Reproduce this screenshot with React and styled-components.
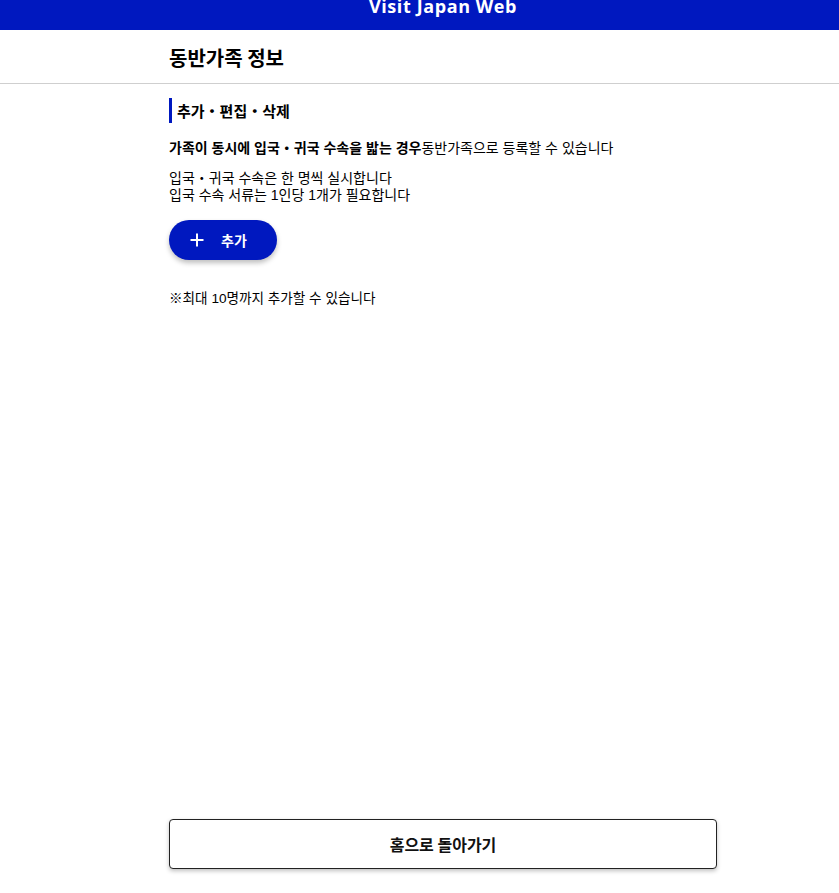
import React from "react";
import styled, { createGlobalStyle } from "styled-components";

const Global = createGlobalStyle`
  html, body { margin: 0; padding: 0; background: #fff; }
  body { font-family: "Liberation Sans", "Noto Sans CJK KR", sans-serif; color: #000; }
  * { box-sizing: border-box; }
`;

const Page = styled.div`
  min-height: 893px;
  display: flex;
  flex-direction: column;
`;

const Header = styled.header`
  height: 30px;
  background: #0018bf;
  display: flex;
  justify-content: center;
  overflow: hidden;
  padding-left: 47px;
`;

const Brand = styled.div`
  font-family: "Open Sans", sans-serif;
  font-weight: 700;
  font-size: 18px;
  letter-spacing: 0.6px;
  color: #fff;
  line-height: 18px;
  margin-top: -3px;
`;

const TitleBar = styled.div`
  height: 54px;
  border-bottom: 1px solid #cfcfcf;
  display: flex;
  align-items: center;
  padding-left: 169px;
`;

const Title = styled.h1`
  margin: 0;
  font-size: 20px;
  font-weight: 700;
  font-family: "Noto Sans CJK KR", sans-serif;
  padding-top: 1px;
`;

const Main = styled.main`
  flex: 1;
  width: 548px;
  margin-left: 169px;
  display: flex;
  flex-direction: column;
`;

const Section = styled.section`
  padding-top: 14px;
  flex: 1;
`;

const SectionHead = styled.h2`
  margin: 0;
  border-left: 3px solid #0018bf;
  padding-left: 5px;
  height: 25px;
  display: flex;
  align-items: center;
  font-size: 15px;
  font-weight: 700;
  font-family: "Noto Sans CJK KR", sans-serif;
`;

const Lead = styled.p`
  margin: 17px 0 0;
  font-size: 14px;
  line-height: 17px;
`;

const Strong = styled.span`
  font-weight: 700;
`;

const Info = styled.p`
  margin: 13px 0 0;
  font-size: 14px;
  line-height: 17px;
`;

const AddButton = styled.button`
  margin-top: 16px;
  width: 108px;
  height: 40px;
  border: none;
  border-radius: 20px;
  background: #0018bf;
  color: #fff;
  display: flex;
  align-items: center;
  gap: 17px;
  padding-left: 21px;
  font-size: 14px;
  font-weight: 700;
  font-family: "Noto Sans CJK KR", sans-serif;
  box-shadow: 0 3px 5px rgba(0, 0, 0, 0.25);
  cursor: pointer;
`;

const Note = styled.p`
  margin: 30px 0 0;
  font-size: 13.6px;
  line-height: 17px;
`;

const Footer = styled.div`
  padding: 0 0 24px;
`;

const HomeButton = styled.button`
  width: 548px;
  height: 50px;
  background: #fff;
  border: 1px solid #222;
  border-radius: 4px;
  box-shadow: 0 2px 4px rgba(0, 0, 0, 0.25);
  font-size: 16px;
  font-weight: 700;
  font-family: "Noto Sans CJK KR", sans-serif;
  color: #111;
  cursor: pointer;
`;

const Plus = () => (
  <svg width="14" height="14" viewBox="0 0 14 14">
    <path d="M7 0.5V13.5M0.5 7H13.5" stroke="#fff" strokeWidth="2" fill="none" />
  </svg>
);

export default function App() {
  return (
    <Page>
      <Global />
      <Header>
        <Brand>Visit Japan Web</Brand>
      </Header>
      <TitleBar>
        <Title>동반가족 정보</Title>
      </TitleBar>
      <Main>
        <Section>
          <SectionHead>추가・편집・삭제</SectionHead>
          <Lead>
            <Strong>가족이 동시에 입국・귀국 수속을 밟는 경우</Strong>동반가족으로 등록할 수 있습니다
          </Lead>
          <Info>
            입국・귀국 수속은 한 명씩 실시합니다
            <br />
            입국 수속 서류는 1인당 1개가 필요합니다
          </Info>
          <AddButton>
            <Plus />
            추가
          </AddButton>
          <Note>※최대 10명까지 추가할 수 있습니다</Note>
        </Section>
        <Footer>
          <HomeButton>홈으로 돌아가기</HomeButton>
        </Footer>
      </Main>
    </Page>
  );
}
